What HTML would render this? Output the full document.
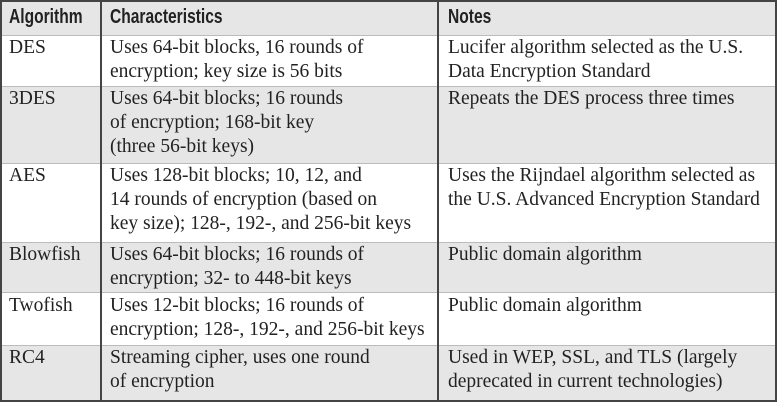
<!DOCTYPE html>
<html><head><style>
body{margin:0;width:777px;height:402px;background:#fff;overflow:hidden;position:relative}
.r{position:absolute;left:0;width:775px}
.g{background:#e6e6e7}
.t{position:absolute;font-family:"Liberation Serif",serif;font-size:19.5px;line-height:24px;color:#222;white-space:nowrap}
.h{position:absolute;font-family:"Liberation Sans",sans-serif;font-weight:bold;font-size:20.5px;color:#222;top:5px;white-space:nowrap;transform:scaleX(0.76);transform-origin:0 0}
.v{position:absolute;top:0;height:402px;width:2px;background:#444}
.hl{position:absolute;left:0;width:777px;height:1px;background:#bbb}
</style></head><body>
<div class="r g" style="top:0;height:35px"></div>
<div class="r g" style="top:86px;height:77px"></div>
<div class="r g" style="top:242px;height:50px"></div>
<div class="r g" style="top:345px;height:55px"></div>
<div class="hl" style="top:35px"></div>
<div class="hl" style="top:86px"></div>
<div class="hl" style="top:163px"></div>
<div class="hl" style="top:242px"></div>
<div class="hl" style="top:292px"></div>
<div class="hl" style="top:345px"></div>
<div style="position:absolute;left:0;top:0;width:773px;height:398px;border:2px solid #444"></div>
<div class="v" style="left:100px"></div>
<div class="v" style="left:437px"></div>
<div class="h" style="left:9px">Algorithm</div>
<div class="h" style="left:110px">Characteristics</div>
<div class="h" style="left:448px">Notes</div>

<div class="t" style="left:9px;top:36px">DES</div>
<div class="t" style="left:110px;top:36px">Uses 64-bit blocks, 16 rounds of<br>encryption; key size is 56 bits</div>
<div class="t" style="left:448px;top:36px">Lucifer algorithm selected as the U.S.<br>Data Encryption Standard</div>

<div class="t" style="left:9px;top:87px">3DES</div>
<div class="t" style="left:110px;top:87px">Uses 64-bit blocks; 16 rounds<br>of encryption; 168-bit key<br>(three 56-bit keys)</div>
<div class="t" style="left:448px;top:87px">Repeats the DES process three times</div>

<div class="t" style="left:9px;top:164px">AES</div>
<div class="t" style="left:110px;top:164px">Uses 128-bit blocks; 10, 12, and<br>14 rounds of encryption (based on<br>key size); 128-, 192-, and 256-bit keys</div>
<div class="t" style="left:448px;top:164px">Uses the Rijndael algorithm selected as<br>the U.S. Advanced Encryption Standard</div>

<div class="t" style="left:9px;top:243px">Blowfish</div>
<div class="t" style="left:110px;top:243px">Uses 64-bit blocks; 16 rounds of<br>encryption; 32- to 448-bit keys</div>
<div class="t" style="left:448px;top:243px">Public domain algorithm</div>

<div class="t" style="left:9px;top:294px">Twofish</div>
<div class="t" style="left:110px;top:294px">Uses 12-bit blocks; 16 rounds of<br>encryption; 128-, 192-, and 256-bit keys</div>
<div class="t" style="left:448px;top:294px">Public domain algorithm</div>

<div class="t" style="left:9px;top:346px">RC4</div>
<div class="t" style="left:110px;top:346px">Streaming cipher, uses one round<br>of encryption</div>
<div class="t" style="left:448px;top:346px">Used in WEP, SSL, and TLS (largely<br>deprecated in current technologies)</div>
</body></html>
